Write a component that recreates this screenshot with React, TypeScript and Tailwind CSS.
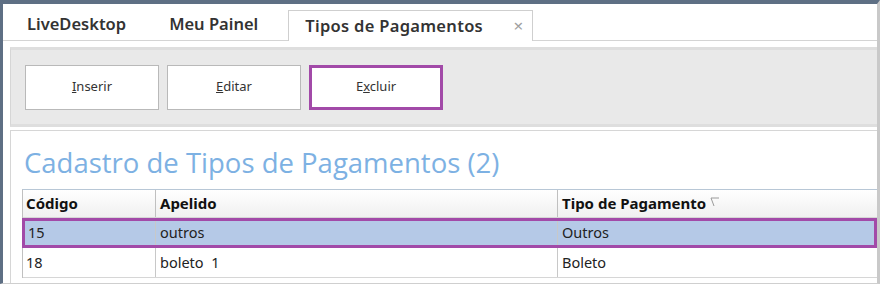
import React from 'react';

const rows = [
  { codigo: '15', apelido: 'outros', tipo: 'Outros', selected: true },
  { codigo: '18', apelido: 'boleto  1', tipo: 'Boleto', selected: false }
];

const ToolButton = ({ label, accessIndex, active }: { label: string; accessIndex: number; active?: boolean }) => (
  <button
    className={
      'w-[134px] h-[45px] bg-white text-[13px] text-[#333] ' +
      (active ? 'border-[3px] border-[#a24aa8]' : 'border border-[#b9b9b9]')
    }
  >
    {label.slice(0, accessIndex)}
    <span className="underline">{label[accessIndex]}</span>
    {label.slice(accessIndex + 1)}
  </button>
);

export default function App() {
  return (
    <div className="w-[886px] h-[286px] bg-white" style={{ fontFamily: '"Noto Sans", "Open Sans", sans-serif' }}>
      <div className="w-[880px] h-[284px] border-l-[3px] border-t-[4px] border-[#5e6f84] border-r-[3px] border-r-[#c9c9c9] border-b border-b-[#cfcfcf] flex flex-col">
        {/* tabs */}
        <div className="h-[37px] flex items-end border-b border-[#d4d4d4] pl-[7px] shrink-0">
          <div className="h-[31px] pl-[17px] pr-[26px] flex items-center text-[16.5px] font-semibold text-[#333]">LiveDesktop</div>
          <div className="h-[31px] pl-[17px] pr-[30px] flex items-center text-[16.5px] font-semibold text-[#333]">Meu Painel</div>
          <div className="h-[31px] w-[245px] -mb-px bg-white border border-b-0 border-[#cfcfcf] flex items-center pl-[16px] pr-[9px] text-[16.5px] font-semibold text-[#333]">
            <span className="flex-1 tracking-[0.3px]">Tipos de Pagamentos</span>
            <span className="text-[17px] font-normal text-[#a0a0a0]">×</span>
          </div>
        </div>

        {/* toolbar */}
        <div className="mt-[6px] ml-[7px] h-[80px] border-y-[3px] border-[#dedede] bg-[#e9e9e9] border-l border-l-[#d6d6d6] flex items-center gap-[8px] pl-[14px] shrink-0">
          <ToolButton label="Inserir" accessIndex={0} />
          <ToolButton label="Editar" accessIndex={0} />
          <ToolButton label="Excluir" accessIndex={1} active />
        </div>

        {/* grid panel */}
        <div className="flex-1 ml-[7px] mt-[3px] border-l border-t border-[#d6d6d6] bg-white pl-[11px] pt-[14px]">
          <div className="text-[27.5px] leading-[36px] text-[#7db1e3] pl-[2px]" style={{ fontFamily: '"Open Sans", sans-serif' }}>
            Cadastro de Tipos de Pagamentos (2)
          </div>
          <div className="mt-[8px] border-t border-[#b8c7d6] border-l border-l-[#c0c0c0] text-[14.5px]">
            <div className="flex h-[28px] bg-gradient-to-b from-white to-[#f0f0f0] border-b border-[#d6d6d6] font-bold text-[15px] text-[#111]">
              <div className="w-[133px] pl-[3px] flex items-center border-r border-[#c0c0c0]">Código</div>
              <div className="w-[402px] pl-[4px] flex items-center border-r border-[#c0c0c0]">Apelido</div>
              <div className="flex-1 pl-[4px] flex items-center">
                Tipo de Pagamento
                <svg width="10" height="10" viewBox="0 0 10 10" className="ml-[4px] mb-[4px]">
                  <path d="M1 1 L9 1 M1 1 L4 9" stroke="#9a9a9a" strokeWidth="1" fill="none" />
                </svg>
              </div>
            </div>
            {rows.map((r) => (
              <div
                key={r.codigo}
                className={
                  'flex h-[30px] text-[#222] ' +
                  (r.selected ? 'bg-[#b5c9e7] border-[3px] border-[#a24aa8] -ml-px' : 'border-b border-[#d6d6d6]')
                }
              >
                <div className={(r.selected ? 'w-[131px]' : 'w-[133px]') + ' pl-[3px] flex items-center border-r border-[#c8c8c8]'}>{r.codigo}</div>
                <div className="w-[402px] pl-[4px] flex items-center border-r border-[#c8c8c8] whitespace-pre">{r.apelido}</div>
                <div className="flex-1 pl-[4px] flex items-center">{r.tipo}</div>
              </div>
            ))}
          </div>
        </div>
      </div>
    </div>
  );
}
